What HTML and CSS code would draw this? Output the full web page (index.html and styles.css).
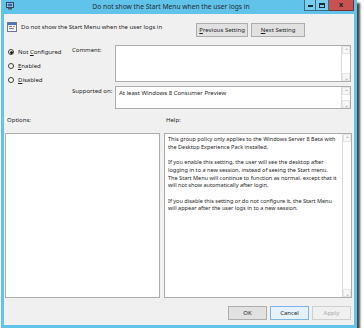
FILE: index.html
```html
<!DOCTYPE html>
<html>
<head>
<meta charset="utf-8">
<link rel="stylesheet" href="styles.css">
</head>
<body>
<div class="window">
  <div class="titlebar">
    <svg class="app-icon" width="8" height="8" viewBox="0 0 8 8">
      <rect x="0.5" y="0.5" width="7" height="5" fill="#dfe9f5" stroke="#34495e"/>
      <rect x="1.5" y="1.5" width="5" height="3" fill="#2d6db5"/>
      <rect x="2" y="6" width="4" height="1.5" fill="#555"/>
    </svg>
    <div class="title">Do not show the Start Menu when the user logs in</div>
    <div class="controls">
      <div class="ctl ctl-min"><span class="bar"></span></div>
      <div class="ctl ctl-max"><span class="sq"></span></div>
      <div class="ctl ctl-close">x</div>
    </div>
  </div>
  <div class="client">
    <div class="header">
      <svg class="policy-icon" width="10" height="10" viewBox="0 0 10 10">
        <rect x="0.5" y="0.5" width="9" height="9" fill="#f4f4f4" stroke="#6a7a8c"/>
        <rect x="1" y="1" width="8" height="2" fill="#4a78b8"/>
        <rect x="2" y="4" width="3" height="1" fill="#8a8a8a"/>
        <rect x="2" y="6" width="5" height="1" fill="#8a8a8a"/>
        <rect x="6" y="4" width="2" height="1" fill="#c9a640"/>
      </svg>
      <div class="header-text">Do not show the Start Menu when the user logs in</div>
      <div class="nav-buttons">
        <div class="btn btn-prev"><u>P</u>revious Setting</div>
        <div class="btn btn-next"><u>N</u>ext Setting</div>
      </div>
    </div>
    <div class="settings">
      <div class="radios">
        <div class="radio-row"><span class="radio checked"></span><span>Not <u>C</u>onfigured</span></div>
        <div class="radio-row"><span class="radio"></span><span><u>E</u>nabled</span></div>
        <div class="radio-row"><span class="radio"></span><span><u>D</u>isabled</span></div>
      </div>
      <div class="fields">
        <div class="field field-comment">
          <div class="label">Comment:</div>
          <div class="box box-comment">
            <div class="box-body"></div>
            <div class="vscroll"><span class="arrow">&#8963;</span><span class="arrow">&#8964;</span></div>
          </div>
        </div>
        <div class="field field-supported">
          <div class="label">Supported on:</div>
          <div class="box box-supported">
            <div class="box-body">At least Windows 8 Consumer Preview</div>
            <div class="vscroll"><span class="arrow">&#8963;</span><span class="arrow">&#8964;</span></div>
          </div>
        </div>
      </div>
    </div>
    <div class="panels">
      <div class="panel panel-options">
        <div class="panel-label">Options:</div>
        <div class="box box-options"></div>
      </div>
      <div class="panel panel-help">
        <div class="panel-label">Help:</div>
        <div class="box box-help">
          <div class="box-body help-text">
            <p>This group policy only applies to the Windows Server 8 Beta with<br>the Desktop Experience Pack installed.</p>
            <p>If you enable this setting, the user will see the desktop after<br>logging in to a new session, instead of seeing the Start menu.<br>The Start Menu will continue to function as normal, except that it<br>will not show automatically after login.</p>
            <p>If you disable this setting or do not configure it, the Start Menu<br>will appear after the user logs in to a new session.</p>
          </div>
          <div class="vscroll"><span class="arrow">&#8963;</span><span class="arrow">&#8964;</span></div>
        </div>
      </div>
    </div>
    <div class="footer">
      <div class="btn btn-ok">OK</div>
      <div class="btn btn-cancel">Cancel</div>
      <div class="btn btn-apply">Apply</div>
    </div>
  </div>
</div>
</body>
</html>
```
FILE: styles.css
```css
* { box-sizing: border-box; }
html, body { margin: 0; padding: 0; background: #ffffff; }
body {
  font-family: "Noto Sans", "Open Sans", sans-serif;
  font-size: 6px;
  color: #1e1e1e;
  padding: 0 0 0 1px;
}
u { text-decoration: underline; text-underline-offset: 1px; }

.window {
  width: 356px;
  height: 328px;
  background: #62c3ea;
  padding: 0 3px 3px 3px;
  display: flex;
  flex-direction: column;
  box-shadow: 3px 3px 2px rgba(40, 40, 40, 0.85);
}

.titlebar {
  height: 14px;
  flex: none;
  display: flex;
  align-items: center;
}
.app-icon { margin: 0 0 2px 2px; flex: none; }
.title {
  flex: 1;
  text-align: center;
  font-size: 6.7px;
  color: #1f2a33;
  padding-left: 24px;
  margin-bottom: 1px;
  white-space: nowrap;
}
.controls {
  display: flex;
  align-self: flex-start;
  height: 11px;
}
.ctl {
  height: 11px;
  border: 1px solid #3f6b80;
  border-top: none;
  display: flex;
  align-items: center;
  justify-content: center;
}
.ctl-min { width: 11px; background: #79cdee; border-right: none; }
.ctl-max { width: 14px; background: #79cdee; }
.ctl-close {
  width: 25px;
  background: #c75250;
  border-color: #7a3333;
  border-left: none;
  color: #222;
  font-size: 7px;
  font-weight: bold;
  line-height: 1;
  padding-bottom: 1px;
}
.bar { width: 5px; height: 1.5px; background: #1d2a33; margin-top: 2px; }
.sq { width: 6px; height: 5px; border: 1px solid #1d2a33; border-top-width: 2px; }

.client {
  flex: 1;
  min-height: 0;
  background: #f0f0f0;
  display: flex;
  flex-direction: column;
  padding: 0 2px 0 1px;
}

.header {
  display: flex;
  align-items: flex-start;
  height: 31px;
  flex: none;
  padding-top: 8px;
}
.policy-icon { margin-left: 2px; flex: none; }
.header-text { margin-left: 4px; margin-top: 1px; flex: none; }
.nav-buttons { display: flex; gap: 3px; margin-left: 34px; margin-top: 1px; }

.btn {
  height: 14px;
  border: 1px solid #adadad;
  background: #e1e1e1;
  display: flex;
  align-items: center;
  justify-content: center;
  white-space: nowrap;
  flex: none;
}
.btn-prev { width: 52px; }
.btn-next { width: 54px; }

.settings {
  display: flex;
  height: 71px;
  flex: none;
}
.radios {
  width: 67px;
  flex: none;
  display: flex;
  flex-direction: column;
  gap: 6px;
  padding-top: 3px;
  padding-left: 3px;
}
.radio-row { display: flex; align-items: center; gap: 4px; height: 8px; }
.radio {
  width: 6px;
  height: 6px;
  border-radius: 50%;
  border: 1px solid #3c3c3c;
  background: #fff;
  display: flex;
  align-items: center;
  justify-content: center;
  flex: none;
}
.radio.checked::after {
  content: "";
  width: 3px;
  height: 3px;
  border-radius: 50%;
  background: #222;
}

.fields { flex: 1; display: flex; flex-direction: column; gap: 4px; }
.field { display: flex; }
.label { width: 43px; padding-top: 1px; flex: none; }
.box {
  background: #ffffff;
  border: 1px solid #acacac;
  display: flex;
  min-width: 0;
}
.box-comment { width: 236px; height: 37px; }
.box-supported { width: 236px; height: 23px; }
.box-body { flex: 1; min-width: 0; padding: 2px 3px; white-space: nowrap; overflow: hidden; }
.vscroll {
  width: 9px;
  flex: none;
  border-left: 1px solid #dcdcdc;
  display: flex;
  flex-direction: column;
  justify-content: space-between;
  align-items: center;
  background: #ffffff;
}
.arrow {
  width: 8px;
  height: 8px;
  font-size: 6px;
  color: #9a9a9a;
  line-height: 8px;
  text-align: center;
  background: #f7f7f7;
  border: 1px solid #e4e4e4;
}

.panels {
  display: flex;
  gap: 4px;
  height: 182px;
  flex: none;
}
.panel { display: flex; flex-direction: column; min-width: 0; }
.panel-label { height: 17px; padding-left: 2px; flex: none; }
.panel-options { width: 155px; flex: none; }
.panel-help { flex: 1; }
.box-options { flex: 1; }
.box-help { flex: 1; }
.help-text { padding: 2px 3px; font-size: 5.55px; line-height: 7.7px; }
.help-text p { margin: 0 0 7.7px 0; }

.footer {
  display: flex;
  justify-content: flex-end;
  gap: 3px;
  padding-top: 8px;
  padding-right: 1px;
}
.btn-ok { width: 39px; }
.btn-cancel { width: 39px; border-color: #7eb4ea; background: #e5f1fb; }
.btn-apply { width: 39px; color: #a8a8a8; border-color: #cfcfcf; background: #f0f0f0; }
```
